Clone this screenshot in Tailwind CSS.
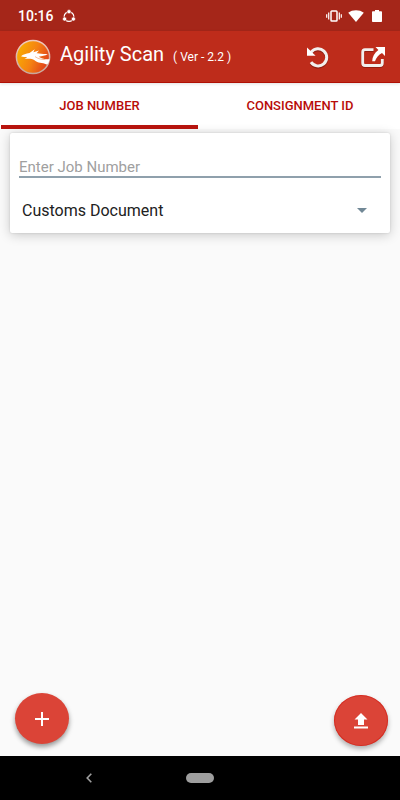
<!DOCTYPE html>
<html lang="en">
<head>
<meta charset="utf-8">
<meta name="viewport" content="width=device-width, initial-scale=1">
<title>Agility Scan</title>
<script src="https://cdn.jsdelivr.net/npm/@tailwindcss/browser@4"></script>
</head>
<body class="flex min-h-screen flex-col bg-[#fafafa] font-[Roboto,sans-serif] text-[#212121]">
  <div class="flex h-[31px] items-center justify-between bg-[#a52619] pr-[18px] pl-[18px] text-white">
    <div class="flex items-center gap-2">
      <span class="text-[14px] leading-4 font-medium">10:16</span>
      <svg class="size-[14px]" viewBox="0 0 14 14" fill="none" stroke="currentColor" aria-hidden="true">
        <circle cx="7" cy="7.6" r="4.8" stroke-width="1.2"/>
        <g fill="currentColor" stroke="#a52619" stroke-width=".6"><circle cx="7" cy="2.7" r="2.1"/><circle cx="2.600" cy="10" r="2.1"/><circle cx="11.400" cy="10" r="2.1"/></g>
      </svg>
    </div>
    <div class="flex items-center gap-[6px]">
      <svg class="h-3 w-4" viewBox="0 0 16 12" fill="none" stroke="currentColor" aria-hidden="true">
        <rect x="5" y="1" width="6" height="10" rx=".8" stroke-width="1.5"/>
        <path d="M2.7 2.500v7M13.300 2.500v7M.7 4.200v3.600M15.300 4.200v3.600" stroke-width="1.200"/>
      </svg>
      <svg class="h-3 w-4" viewBox="0 0 16 12" fill="currentColor" aria-hidden="true"><path d="M8 12 .2 2.700C4.500-.6 11.500-.6 15.800 2.700Z"/></svg>
      <svg class="ml-[2px] h-3 w-[10px]" viewBox="0 0 10 12" fill="currentColor" aria-hidden="true"><path d="M3 0h4v1.200h2.200q.8 0 .8.800v9.200q0 .8-.8.800H.8Q0 12 0 11.200V2q0-.8.8-.8H3Z"/></svg>
    </div>
  </div>

  <header class="z-10 flex h-[52px] items-center border-b border-[#b01005] bg-[#be2c1b] pr-[15px] pl-[15px] text-white shadow-[0_1px_3px_rgba(0,0,0,0.12)]">
    <svg class="size-9" viewBox="0 0 36 36" aria-hidden="true">
      <defs>
        <linearGradient id="sun" x1="0" y1=".3" x2="1" y2=".7"><stop offset="0" stop-color="#f9b000"/><stop offset=".5" stop-color="#f58212"/><stop offset="1" stop-color="#dd3a1d"/></linearGradient>
        <linearGradient id="rim" x1="0" y1="0" x2="0" y2="1"><stop offset="0" stop-color="#f0c9bb"/><stop offset="1" stop-color="#c9a79b"/></linearGradient>
      </defs>
      <circle cx="18" cy="18" r="16.600" fill="url(#sun)" stroke="url(#rim)" stroke-width="1.500"/>
      <path fill="#fff" d="M6 17.300C8 15.300 11 14.500 14.500 13.900L19.700 10.200 18.400 13.300 24 11.400 21.600 14.200C25 14 28 15.500 32.800 15 30 17 27 17 23.700 17.700 27 19.600 30 20.800 34.500 20 34 23.500 33 25 31.500 25.500 27 23 23 24.500 19.500 21.200 16.500 19 13 20 9.500 19.700 11 19 12 18.300 12.200 17.900 10 17.800 8 18.300 6 17.300Z"/>
      <path d="M20 17.600c3.500 2.500 7 3 10.500 3" fill="none" stroke="#ef7a35" stroke-width=".5"/>
    </svg>
    <div class="mb-[6px] ml-[9px] flex items-baseline gap-[9px]">
      <h1 class="text-[20px] leading-6">Agility Scan</h1>
      <span class="text-[12px] leading-4">( Ver - 2.2 )</span>
    </div>
    <div class="ml-auto flex items-center gap-[31px]">
      <button type="button" aria-label="Reset" class="size-6">
        <svg class="size-6" viewBox="0 0 24 24" fill="none" aria-hidden="true">
          <path d="M5.200 8.400A8.600 8.600 0 1 1 5 18.400" stroke="#7c1a10" stroke-opacity=".65" stroke-width="3.200"/>
          <path d="M5.200 7.200A8.600 8.600 0 1 1 5 17.200" stroke="#f2f0ee" stroke-width="3"/>
          <path d="M1 2.500v8.200h8.600Z" fill="#fff"/>
        </svg>
      </button>
      <button type="button" aria-label="Open externally" class="size-6">
        <svg class="size-6" viewBox="0 0 24 24" fill="none" aria-hidden="true">
          <path d="M12.500 5.500H4Q1.700 5.500 1.700 8v11Q1.700 21.500 4 21.500h15Q21.300 21.500 21.300 19v-3.500" stroke="#7c1a10" stroke-opacity=".65" stroke-width="3"/>
          <path d="M12.500 4.600H4Q1.700 4.600 1.700 7v11Q1.700 20.500 4 20.500h15Q21.300 20.500 21.300 18v-4" stroke="#f2f0ee" stroke-width="2.800"/>
          <path d="M14.500 2H24v9l-3-3c-3.500 2-5.800 4.500-7 8.300H11.200C11.300 11.500 13.500 8 17.400 5Z" fill="#fff"/>
        </svg>
      </button>
    </div>
  </header>

  <div role="tablist" class="grid h-[46px] grid-cols-2 bg-white text-[13px] leading-4 font-medium text-[#b80c09]">
    <button type="button" role="tab" aria-selected="true" class="mr-[2px] ml-px border-b-4 border-[#b9150f] pt-[3px]">JOB NUMBER</button>
    <button type="button" role="tab" aria-selected="false" class="border-b-4 border-transparent pt-[3px]">CONSIGNMENT ID</button>
  </div>

  <main class="flex flex-1 flex-col justify-between">
    <form class="mx-[10px] mt-1 flex h-[100px] flex-col rounded-[2px] bg-white px-[9px] shadow-[0_2px_12px_rgba(0,0,0,0.2),0_0_2px_rgba(0,0,0,0.15)]">
      <input type="text" aria-label="Job number" placeholder="Enter Job Number" class="mt-[23px] h-[22px] w-full border-b-2 border-[#8fa0ac] pt-[2px] text-[15px] leading-5 outline-none placeholder:text-[#a0a0a0]">
      <div class="relative mt-[22px]">
        <select aria-label="Document type" class="block h-[22px] w-full appearance-none bg-transparent pl-[3px] text-[16px] leading-5 outline-none"><option>Customs Document</option></select>
        <svg class="pointer-events-none absolute top-2 right-[14px] h-[5px] w-[10px]" viewBox="0 0 10 5" fill="#718896" aria-hidden="true"><path d="M0 0h10L5 5Z"/></svg>
      </div>
    </form>
    <div class="flex items-end justify-between pr-[12px] pb-[10px] pl-[15px]">
      <button type="button" aria-label="Add" class="mb-[2px] flex h-[51px] w-[54px] items-center justify-center rounded-[50%] bg-[#db4437] text-white shadow-[0_3px_5px_rgba(0,0,0,0.4)]">
        <svg class="size-[14px]" viewBox="0 0 14 14" stroke="currentColor" stroke-width="2" aria-hidden="true"><path d="M7 0v14M0 7h14"/></svg>
      </button>
      <button type="button" aria-label="Upload" class="flex h-[51px] w-[54px] items-center justify-center rounded-[50%] bg-[#db4437] text-white shadow-[0_3px_5px_rgba(0,0,0,0.3)] ring-1 ring-[#d0140c]/50 ring-inset">
        <svg class="h-4 w-[14px]" viewBox="0 0 14 16" fill="currentColor" aria-hidden="true"><path d="m7 0 6.500 6.500H10V12H4V6.500H.5ZM0 13.500h14v2H0Z"/></svg>
      </button>
    </div>
  </main>

  <nav aria-label="System navigation" class="grid h-11 grid-cols-[178px_1fr_178px] items-center bg-black">
    <button type="button" aria-label="Back" class="flex h-11 items-center justify-center">
      <svg class="h-[10px] w-[6px]" viewBox="0 0 6 10" fill="none" stroke="#a0a0a0" stroke-width="1.600" aria-hidden="true"><path d="M5.300.8 1.200 5l4.100 4.200"/></svg>
    </button>
    <button type="button" aria-label="Home" class="mx-auto h-[10px] w-7 rounded-full bg-[#9e9e9e]"></button>
  </nav>
</body>
</html>
